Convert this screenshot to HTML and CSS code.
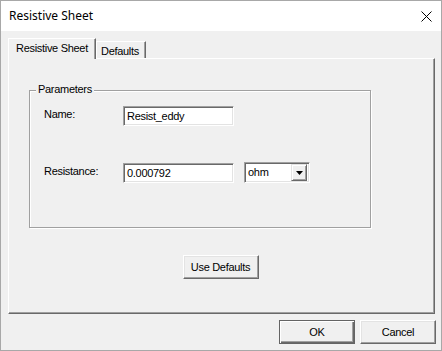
FILE: index.html
```html
<!DOCTYPE html>
<html>
<head>
<meta charset="utf-8">
<link rel="stylesheet" href="styles.css">
</head>
<body>
<div class="window">
  <div class="titlebar">
    <span class="title">Resistive Sheet</span>
    <svg class="close" width="11" height="11" viewBox="0 0 11 11"><path d="M0.5 0.5 L10.5 10.5 M10.5 0.5 L0.5 10.5" stroke="#000" stroke-width="1" fill="none"/></svg>
  </div>
  <div class="client">
    <div class="tabs">
      <div class="tab tab-active">Resistive Sheet</div>
      <div class="tab tab-defaults">Defaults</div>
    </div>
    <div class="panel">
      <div class="group">
        <span class="group-label">Parameters</span>
        <div class="grid">
          <span class="lbl">Name:</span>
          <div class="field">Resist_eddy</div>
          <span></span>
          <span class="lbl">Resistance:</span>
          <div class="field">0.000792</div>
          <div class="combo">
            <span class="combo-text">ohm</span>
            <span class="combo-btn"><svg width="7" height="4" viewBox="0 0 7 4"><path d="M0 0 H7 L3.5 4 Z" fill="#000"/></svg></span>
          </div>
        </div>
      </div>
      <div class="use-row"><div class="btn">Use Defaults</div></div>
    </div>
    <div class="footer">
      <div class="btn btn-default">OK</div>
      <div class="btn">Cancel</div>
    </div>
  </div>
</div>
</body>
</html>
```
FILE: styles.css
```css
html, body {
  margin: 0;
  padding: 0;
}
body {
  width: 442px;
  height: 351px;
  overflow: hidden;
  font-family: "Liberation Sans", Arial, sans-serif;
  font-size: 11px;
  letter-spacing: -0.3px;
  color: #000;
  background: #f0f0f0;
}
.window {
  box-sizing: border-box;
  width: 442px;
  height: 351px;
  border: 1px solid #a8a8a8;
  display: flex;
  flex-direction: column;
  background: #f0f0f0;
}
.titlebar {
  height: 30px;
  flex: none;
  background: #fff;
  display: flex;
  align-items: center;
  justify-content: space-between;
  padding: 0 9px 0 8px;
}
.title {
  font-family: "Noto Sans", "Liberation Sans", sans-serif;
  font-size: 12px;
  letter-spacing: 0;
  line-height: 16px;
}
.close {
  display: block;
}
.client {
  flex: 1;
  padding: 7px 5px 0 7px;
  display: flex;
  flex-direction: column;
}
.tabs {
  display: flex;
  align-items: flex-start;
  height: 20px;
}
.tab {
  box-sizing: border-box;
  border-left: 1px solid #fff;
  border-top: 1px solid #fff;
  border-right: 1px solid #696969;
  box-shadow: inset -1px 0 0 #a0a0a0;
  background: #f0f0f0;
  line-height: 13px;
  padding-top: 3px;
  white-space: nowrap;
}
.tab-active {
  width: 88px;
  height: 21px;
  margin-bottom: -1px;
  padding-left: 7px;
  position: relative;
  z-index: 1;
}
.tab-defaults {
  width: 50px;
  height: 17px;
  margin-top: 3px;
  padding-left: 4px;
}
.panel {
  box-sizing: border-box;
  width: 427px;
  height: 256px;
  flex: none;
  border-top: 1px solid #fff;
  border-left: 1px solid #fff;
  border-right: 1px solid #696969;
  border-bottom: 1px solid #696969;
  box-shadow: inset -1px -1px 0 #a0a0a0;
  display: flex;
  flex-direction: column;
  padding-top: 31px;
}
.group {
  box-sizing: border-box;
  position: relative;
  width: 342px;
  height: 138px;
  margin-left: 20px;
  border: 1px solid #a0a0a0;
  box-shadow: inset 1px 1px 0 #fff, 1px 1px 0 #fff;
}
.group-label {
  position: absolute;
  top: -8px;
  left: 6px;
  padding: 0 2px;
  line-height: 13px;
  background: #f0f0f0;
}
.grid {
  display: grid;
  grid-template-columns: 79px 111px 76px;
  grid-template-rows: 20px 20px;
  row-gap: 37px;
  padding: 15px 0 0 14px;
}
.grid .lbl {
  line-height: 13px;
  margin-top: 2px;
  white-space: nowrap;
}
.field, .combo {
  box-sizing: border-box;
  height: 20px;
  background: #fff;
  border-top: 1px solid #a0a0a0;
  border-left: 1px solid #a0a0a0;
  border-right: 1px solid #fff;
  border-bottom: 1px solid #fff;
  box-shadow: inset 1px 1px 0 #696969, inset -1px -1px 0 #e3e3e3;
  line-height: 18px;
  padding-left: 3px;
  white-space: nowrap;
}
.combo {
  display: flex;
  justify-content: space-between;
  width: 66px;
  margin-left: 10px;
  padding: 1px 2px 1px 2px;
  line-height: 16px;
  height: 21px;
  margin-top: -1px;
}
.combo-text {
  padding-left: 1px;
  line-height: 17px;
}
.combo-btn {
  box-sizing: border-box;
  width: 16px;
  height: 17px;
  background: #f0f0f0;
  border-top: 1px solid #e3e3e3;
  border-left: 1px solid #e3e3e3;
  border-right: 1px solid #696969;
  border-bottom: 1px solid #696969;
  box-shadow: inset 1px 1px 0 #fff, inset -1px -1px 0 #a0a0a0;
  display: flex;
  align-items: center;
  justify-content: center;
  padding-top: 1px;
}
.combo-btn svg {
  display: block;
}
.use-row {
  display: flex;
  justify-content: center;
  margin-top: 27px;
  padding-right: 2px;
}
.btn {
  box-sizing: border-box;
  width: 76px;
  height: 24px;
  background: #f0f0f0;
  border-top: 1px solid #fff;
  border-left: 1px solid #fff;
  border-right: 1px solid #696969;
  border-bottom: 1px solid #696969;
  box-shadow: inset -1px -1px 0 #a0a0a0, inset 1px 1px 0 #e3e3e3;
  display: flex;
  align-items: center;
  justify-content: center;
  line-height: 13px;
  white-space: nowrap;
}
.btn-default {
  border: 1px solid #646464;
  box-shadow: inset 1px 1px 0 #fff, inset -1px -1px 0 #696969, inset -2px -2px 0 #a0a0a0;
}
.footer {
  display: flex;
  justify-content: flex-end;
  gap: 5px;
  margin-top: 6px;
}
```
